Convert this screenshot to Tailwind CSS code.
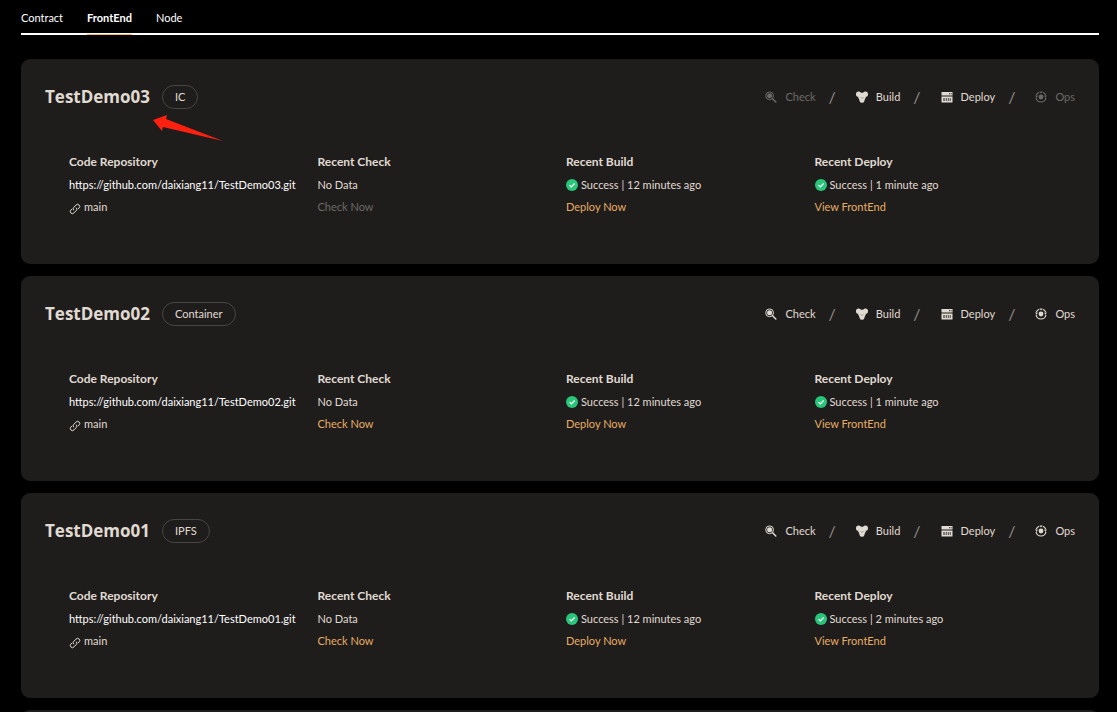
<!DOCTYPE html>
<html lang="en">
<head>
<meta charset="utf-8">
<title>Projects</title>
<script src="https://cdn.jsdelivr.net/npm/@tailwindcss/browser@4"></script>
</head>
<body class="bg-black font-['Lato',sans-serif] text-[11px] text-[#e0dbd2]">
<svg class="hidden" aria-hidden="true">
  <symbol id="check" viewBox="0 0 12 12"><circle cx="4.6" cy="4.8" r="3.9" fill="none" stroke="currentColor" stroke-width="1"/><circle cx="4.6" cy="4.8" r="2.5" fill="currentColor"/><path d="M7.6 7.8 10.8 11" stroke="currentColor" stroke-width="1.5" stroke-linecap="round"/></symbol>
  <symbol id="build" viewBox="0 0 12 12"><g fill="currentColor"><circle cx="2.6" cy="3.2" r="2.6"/><circle cx="9.4" cy="3.2" r="2.6"/><path d="M2.8 3 6 1.6 9.2 3 9.8 6.8 8.4 9H3.6L2.2 6.8Z"/><rect x="3.5" y="6.5" width="5" height="5.2" rx="2.2"/></g><path d="M4.4 6.5 6 7.3l1.6-.8" fill="none" stroke="#1f1d1c" stroke-width=".3"/></symbol>
  <symbol id="deploy" viewBox="0 0 12 12"><path fill="currentColor" fill-rule="evenodd" d="M.5 1h11v3.6H.5ZM8 2.2v1h1v-1Zm1.7 0v1h1v-1ZM.5 5.6h11V11.5H.5ZM2.5 6.9v3h1v-3Zm2.3 0v3h.8v-3Zm2 0v3h.8v-3Zm2 0v3h.8v-3Z"/></symbol>
  <symbol id="ops" viewBox="0 0 12 12"><circle cx="6" cy="6" r="2.4" fill="currentColor"/><path d="M4.2 1.3A5 5 0 0 0 1.3 4M7.8 1.3A5 5 0 0 1 10.7 4M1.1 7a5 5 0 0 0 9.8 0" fill="none" stroke="currentColor" stroke-width="1.2"/><path d="M4.4.6h3.2L6 2.6ZM.1 4.4h2.8L1.6 7ZM11.9 4.4H9.1L10.4 7Z" fill="currentColor"/></symbol>
  <symbol id="link" viewBox="0 0 12 12"><path d="M4.8 7.3a2.1 2.1 0 0 1 0-3L7 2.1a2.1 2.1 0 0 1 3.2 2.8L8.9 6.2M7.2 4.7a2.1 2.1 0 0 1 0 3L5 9.9a2.1 2.1 0 0 1-3.2-2.8l1.3-1.3" fill="none" stroke="currentColor" stroke-width="1"/></symbol>
  <symbol id="ok" viewBox="0 0 12 12"><circle cx="6" cy="6" r="6" fill="#29c57b"/><path d="m3.5 6.1 1.8 1.8 3.3-3.4" fill="none" stroke="#fff" stroke-width="1.2"/></symbol>
</svg>

<div class="h-screen overflow-hidden pr-[18px] pl-[21px]">
  <nav class="flex h-[35px] gap-6 border-b-2 border-white text-white">
    <a href="#" class="pt-[9px] leading-[18px]">Contract</a>
    <a href="#" class="-mb-0.5 border-b border-[#f5b461] pt-[9px] leading-[18px] font-bold" aria-current="page">FrontEnd</a>
    <a href="#" class="pt-[9px] leading-[18px]">Node</a>
  </nav>

  <main class="mt-6 flex flex-col gap-3">
    <section class="relative rounded-[9px] bg-[#1f1d1c] px-6 pt-6 pb-[46px]">
      <header class="flex h-7 items-center">
        <h2 class="font-['Open_Sans',sans-serif] text-[17px] leading-7 font-bold">TestDemo03</h2>
        <span class="ml-3 flex h-6 items-center rounded-full border border-[#484644] px-3">IC</span>
        <div class="ml-auto flex items-center">
          <button class="flex items-center gap-2 text-[#6b6966]" disabled><svg class="size-3"><use href="#check"/></svg>Check</button>
          <span class="mr-5 ml-[13px] text-base text-[#8f8c87]">/</span>
          <button class="flex items-center gap-2"><svg class="size-3"><use href="#build"/></svg>Build</button>
          <span class="mr-5 ml-[13px] text-base text-[#8f8c87]">/</span>
          <button class="flex items-center gap-2"><svg class="size-3"><use href="#deploy"/></svg>Deploy</button>
          <span class="mr-5 ml-[13px] text-base text-[#8f8c87]">/</span>
          <button class="flex items-center gap-2 text-[#6b6966]" disabled><svg class="size-3"><use href="#ops"/></svg>Ops</button>
        </div>
      </header>
      <svg class="absolute top-[55px] left-[132px] h-7 w-[70px]" viewBox="0 0 70 28" aria-hidden="true"><path d="M0 6 14 1 13 5 70 27 10 13 9 17Z" fill="#ff2010"/></svg>
      <div class="mt-10 grid grid-cols-4 pr-3 pl-6 leading-[22px]">
        <div><h3 class="mb-px text-xs leading-[22px] font-bold">Code Repository</h3><a href="#" class="block text-white">https://github.com/daixiang11/TestDemo03.git</a><p class="flex items-center gap-[3px]"><svg class="mt-1 size-3"><use href="#link"/></svg>main</p></div>
        <div><h3 class="mb-px text-xs leading-[22px] font-bold">Recent Check</h3><p>No Data</p><button class="block text-[#6b6966]" disabled>Check Now</button></div>
        <div><h3 class="mb-px text-xs leading-[22px] font-bold">Recent Build</h3><p class="flex items-center gap-[3px]"><svg class="size-3"><use href="#ok"/></svg>Success | 12 minutes ago</p><button class="block text-[#e6ac63]">Deploy Now</button></div>
        <div><h3 class="mb-px text-xs leading-[22px] font-bold">Recent Deploy</h3><p class="flex items-center gap-[3px]"><svg class="size-3"><use href="#ok"/></svg>Success | 1 minute ago</p><button class="block text-[#e6ac63]">View FrontEnd</button></div>
      </div>
    </section>

    <section class="rounded-[9px] bg-[#1f1d1c] px-6 pt-6 pb-[46px]">
      <header class="flex h-7 items-center">
        <h2 class="font-['Open_Sans',sans-serif] text-[17px] leading-7 font-bold">TestDemo02</h2>
        <span class="ml-3 flex h-6 items-center rounded-full border border-[#484644] px-3">Container</span>
        <div class="ml-auto flex items-center">
          <button class="flex items-center gap-2"><svg class="size-3"><use href="#check"/></svg>Check</button>
          <span class="mr-5 ml-[13px] text-base text-[#8f8c87]">/</span>
          <button class="flex items-center gap-2"><svg class="size-3"><use href="#build"/></svg>Build</button>
          <span class="mr-5 ml-[13px] text-base text-[#8f8c87]">/</span>
          <button class="flex items-center gap-2"><svg class="size-3"><use href="#deploy"/></svg>Deploy</button>
          <span class="mr-5 ml-[13px] text-base text-[#8f8c87]">/</span>
          <button class="flex items-center gap-2"><svg class="size-3"><use href="#ops"/></svg>Ops</button>
        </div>
      </header>
      <div class="mt-10 grid grid-cols-4 pr-3 pl-6 leading-[22px]">
        <div><h3 class="mb-px text-xs leading-[22px] font-bold">Code Repository</h3><a href="#" class="block text-white">https://github.com/daixiang11/TestDemo02.git</a><p class="flex items-center gap-[3px]"><svg class="mt-1 size-3"><use href="#link"/></svg>main</p></div>
        <div><h3 class="mb-px text-xs leading-[22px] font-bold">Recent Check</h3><p>No Data</p><button class="block text-[#e6ac63]">Check Now</button></div>
        <div><h3 class="mb-px text-xs leading-[22px] font-bold">Recent Build</h3><p class="flex items-center gap-[3px]"><svg class="size-3"><use href="#ok"/></svg>Success | 12 minutes ago</p><button class="block text-[#e6ac63]">Deploy Now</button></div>
        <div><h3 class="mb-px text-xs leading-[22px] font-bold">Recent Deploy</h3><p class="flex items-center gap-[3px]"><svg class="size-3"><use href="#ok"/></svg>Success | 1 minute ago</p><button class="block text-[#e6ac63]">View FrontEnd</button></div>
      </div>
    </section>

    <section class="rounded-[9px] bg-[#1f1d1c] px-6 pt-6 pb-[46px]">
      <header class="flex h-7 items-center">
        <h2 class="font-['Open_Sans',sans-serif] text-[17px] leading-7 font-bold">TestDemo01</h2>
        <span class="ml-3 flex h-6 items-center rounded-full border border-[#484644] px-3">IPFS</span>
        <div class="ml-auto flex items-center">
          <button class="flex items-center gap-2"><svg class="size-3"><use href="#check"/></svg>Check</button>
          <span class="mr-5 ml-[13px] text-base text-[#8f8c87]">/</span>
          <button class="flex items-center gap-2"><svg class="size-3"><use href="#build"/></svg>Build</button>
          <span class="mr-5 ml-[13px] text-base text-[#8f8c87]">/</span>
          <button class="flex items-center gap-2"><svg class="size-3"><use href="#deploy"/></svg>Deploy</button>
          <span class="mr-5 ml-[13px] text-base text-[#8f8c87]">/</span>
          <button class="flex items-center gap-2"><svg class="size-3"><use href="#ops"/></svg>Ops</button>
        </div>
      </header>
      <div class="mt-10 grid grid-cols-4 pr-3 pl-6 leading-[22px]">
        <div><h3 class="mb-px text-xs leading-[22px] font-bold">Code Repository</h3><a href="#" class="block text-white">https://github.com/daixiang11/TestDemo01.git</a><p class="flex items-center gap-[3px]"><svg class="mt-1 size-3"><use href="#link"/></svg>main</p></div>
        <div><h3 class="mb-px text-xs leading-[22px] font-bold">Recent Check</h3><p>No Data</p><button class="block text-[#e6ac63]">Check Now</button></div>
        <div><h3 class="mb-px text-xs leading-[22px] font-bold">Recent Build</h3><p class="flex items-center gap-[3px]"><svg class="size-3"><use href="#ok"/></svg>Success | 12 minutes ago</p><button class="block text-[#e6ac63]">Deploy Now</button></div>
        <div><h3 class="mb-px text-xs leading-[22px] font-bold">Recent Deploy</h3><p class="flex items-center gap-[3px]"><svg class="size-3"><use href="#ok"/></svg>Success | 2 minutes ago</p><button class="block text-[#e6ac63]">View FrontEnd</button></div>
      </div>
    </section>

    <section class="rounded-[9px] bg-[#1f1d1c] p-6"></section>
  </main>
</div>
</body>
</html>
